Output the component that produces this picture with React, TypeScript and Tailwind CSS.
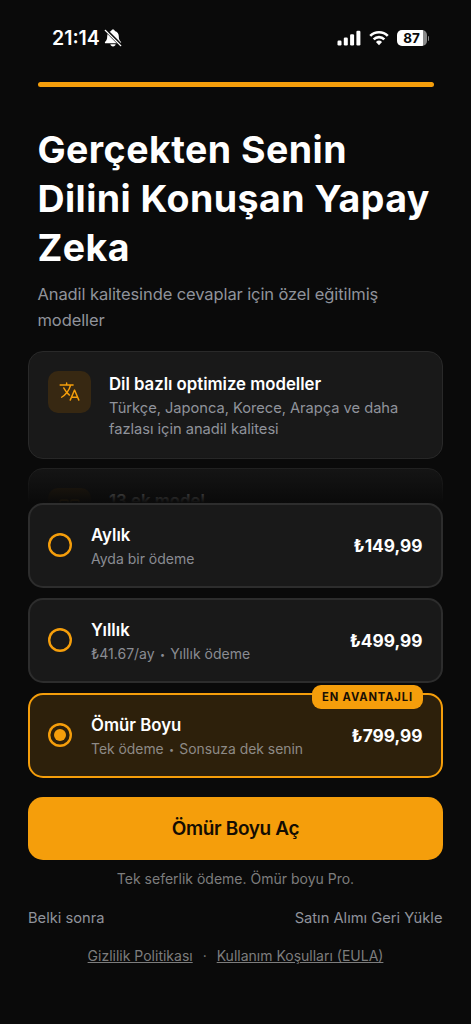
import { useState } from "react";
import clsx from "clsx";
import { IoLanguageOutline, IoGridOutline } from "react-icons/io5";

const plans = [
  { id: "monthly", name: "Aylık", details: ["Ayda bir ödeme"], price: "₺149,99" },
  { id: "yearly", name: "Yıllık", details: ["₺41.67/ay", "Yıllık ödeme"], price: "₺499,99" },
  {
    id: "lifetime",
    name: "Ömür Boyu",
    details: ["Tek ödeme", "Sonsuza dek senin"],
    price: "₺799,99",
    badge: "EN AVANTAJLI",
  },
];

function StatusBar() {
  return (
    <div className="flex h-[76px] items-center justify-between pl-[52px] pr-[42px] text-white">
      <div className="flex items-center gap-1">
        <span className="mt-0.5 text-[19.5px] font-semibold leading-none">21:14</span>
        <svg width="18" height="18" viewBox="0 0 18 18" fill="currentColor">
          <path d="M9 .6c-1 0-1.7.6-1.8 1.3C4.6 2.6 3.2 4.7 3.2 7.3c0 3-.6 4-2 5.4-.6.6-.4 1.6.5 1.6h14.6c.9 0 1.1-1 .5-1.6-1.4-1.4-2-2.4-2-5.4 0-2.6-1.4-4.7-4-5.4C10.700 1.200 10 .6 9 .6z" />
          <path d="M6.4 15.2h5.200c-.2 1.300-1.200 2.200-2.600 2.200s-2.400-.9-2.600-2.200z" />
          <path d="M1.6 .9 17.2 16.5" stroke="#0a0a0a" strokeWidth="3.2" />
          <path d="M1.2 1.3 16.8 16.7" stroke="currentColor" strokeWidth="1.2" strokeLinecap="round" />
        </svg>
      </div>
      <div className="flex items-center">
        <svg width="24" height="16" viewBox="0 0 24 16" fill="currentColor">
          <rect x="0.5" y="10.5" width="4" height="5" rx="1.2" />
          <rect x="6.8" y="7.5" width="4" height="8" rx="1.2" />
          <rect x="13.1" y="4.3" width="4" height="11.2" rx="1.2" />
          <rect x="19.4" y="0.8" width="4" height="14.7" rx="1.2" />
        </svg>
        <svg className="ml-2" width="20" height="16" viewBox="0 0 21 16" fill="none" stroke="currentColor" strokeWidth="2.8">
          <path d="M1.3 5.8a13 13 0 0 1 18.4 0" />
          <path d="M4.9 9.4a8 8 0 0 1 11.2 0" />
          <path d="M10.5 15.5 7.3 12.2a4.6 4.6 0 0 1 6.4 0z" fill="currentColor" stroke="none" />
        </svg>
        <div className="ml-2 flex items-center">
          <div className="flex h-4 w-[30px] items-center justify-center rounded-[5px] bg-linear-to-r from-white from-86% to-[#8a8a8a] to-86% text-[13.5px] font-bold leading-none text-[#0a0a0a]">
            <span className="mt-px">87</span>
          </div>
          <div className="ml-px h-[5px] w-[1.5px] rounded-r-full bg-[#8a8a8a]" />
        </div>
      </div>
    </div>
  );
}

export default function App() {
  const [selected, setSelected] = useState("lifetime");

  return (
    <div className="flex h-[1024px] w-[471px] flex-col overflow-hidden bg-[#0a0a0a] font-['Inter',sans-serif]">
      <StatusBar />
      <div className="ml-[37.5px] mr-[37.5px] mt-[5.8px] h-[5px] shrink-0 rounded-full bg-[#f59e0b]" />

      <div className="relative h-[416.2px] shrink-0 overflow-hidden px-7 pt-[38.2px]">
        <h1 className="ml-[9.4px] whitespace-nowrap text-[37.5px] font-bold leading-[49px] tracking-[0.46px] text-white">
          Gerçekten Senin
          <br />
          Dilini Konuşan Yapay
          <br />
          Zeka
        </h1>
        <p className="ml-[9.5px] mt-[8.8px] whitespace-nowrap text-[16.5px] leading-[26px] tracking-[-0.1px] text-[#90939b]">
          Anadil kalitesinde cevaplar için özel eğitilmiş
          <br />
          modeller
        </p>

        <div className="mt-[17.8px] flex h-[108px] rounded-[15px] border border-[#292929] bg-[#191919] p-[19px]">
          <div className="flex size-[42.5px] items-center justify-center rounded-[10px] bg-[#372812] text-[#f59e0b]">
            <IoLanguageOutline size={23} />
          </div>
          <div className="ml-[18.5px] whitespace-nowrap">
            <h2 className="pt-px text-[16.8px] font-semibold leading-6 tracking-[-0.03px] text-white">
              Dil bazlı optimize modeller
            </h2>
            <p className="mt-0.5 text-[14.7px] leading-[21px] tracking-[-0.03px] text-[#90939b]">
              Türkçe, Japonca, Korece, Arapça ve daha
              <br />
              fazlası için anadil kalitesi
            </p>
          </div>
        </div>

        <div className="mt-[9.5px] flex h-[108px] rounded-[15px] border border-[#292929] bg-[#191919] p-[19px]">
          <div className="flex size-[42.5px] items-center justify-center rounded-[10px] bg-[#372812] text-[#f59e0b]">
            <IoGridOutline size={23} />
          </div>
          <h2 className="ml-[18.5px] pt-px text-[16.8px] font-semibold leading-6 text-white">13 ek model</h2>
        </div>

        <div className="absolute inset-x-0 bottom-0 h-12 bg-linear-to-b from-transparent to-[#0a0a0a]" />
      </div>

      <div className="mx-7 flex flex-col gap-[10px]">
        {plans.map((plan) => {
          const active = plan.id === selected;
          return (
            <button
              key={plan.id}
              onClick={() => setSelected(plan.id)}
              className={clsx(
                "relative flex h-[85px] items-center rounded-[15px] border-2 px-[18.5px] text-left",
                active ? "border-[#f59e0b] bg-[#2d200b]" : "border-[#2d2d2d] bg-[#191919]"
              )}
            >
              <span className="-ml-[0.3px] flex size-6 items-center justify-center rounded-full inset-ring-[2.4px] inset-ring-[#f59e0b]">
                {active && <span className="size-3 rounded-full bg-[#f59e0b]" />}
              </span>
              <span className="ml-[18.8px] flex-1 whitespace-nowrap pt-[3.5px]">
                <span className="block text-[16.8px] font-semibold leading-6 text-white">{plan.name}</span>
                <span className={clsx("block leading-6", active ? "text-[13.9px] text-[#8d8a86]" : "text-[14px] text-[#8a8c93]")}>
                  {plan.details[0]}
                  {plan.details[1] && (
                    <>
                      <span className="mx-[4.8px] inline-block w-1.5 text-center align-[1px] text-[9px] leading-none">•</span>
                      {plan.details[1]}
                    </>
                  )}
                </span>
              </span>
              <span className="text-[17.3px] font-bold text-white">{plan.price}</span>
              {plan.badge && (
                <span className="absolute -top-[10px] right-[18px] flex h-6 w-[111px] items-center justify-center rounded-[9px] bg-[#f59e0b] text-[11.2px] font-bold tracking-[0.85px] text-[#1a1004]">
                  {plan.badge}
                </span>
              )}
            </button>
          );
        })}
      </div>

      <button className="mx-7 mt-[19px] h-[63px] shrink-0 rounded-[15px] bg-[#f59e0b] pt-0.5 text-[19px] font-semibold tracking-[-0.35px] text-[#140d02]">
        Ömür Boyu Aç
      </button>
      <p className="mt-[9px] text-center text-[14px] leading-5 text-[#7d7d7d]">
        Tek seferlik ödeme. Ömür boyu Pro.
      </p>
      <div className="ml-7 mr-[28.5px] mt-[19px] flex justify-between text-[14.7px] leading-5 text-[#90939b]">
        <button>Belki sonra</button>
        <button>Satın Alımı Geri Yükle</button>
      </div>
      <div className="mt-[18.5px] flex justify-center text-[14px] leading-5 text-[#7d7d7d]">
        <a className="underline">Gizlilik Politikası</a>
        <span className="w-6 text-center">·</span>
        <a className="underline">Kullanım Koşulları (EULA)</a>
      </div>
    </div>
  );
}
